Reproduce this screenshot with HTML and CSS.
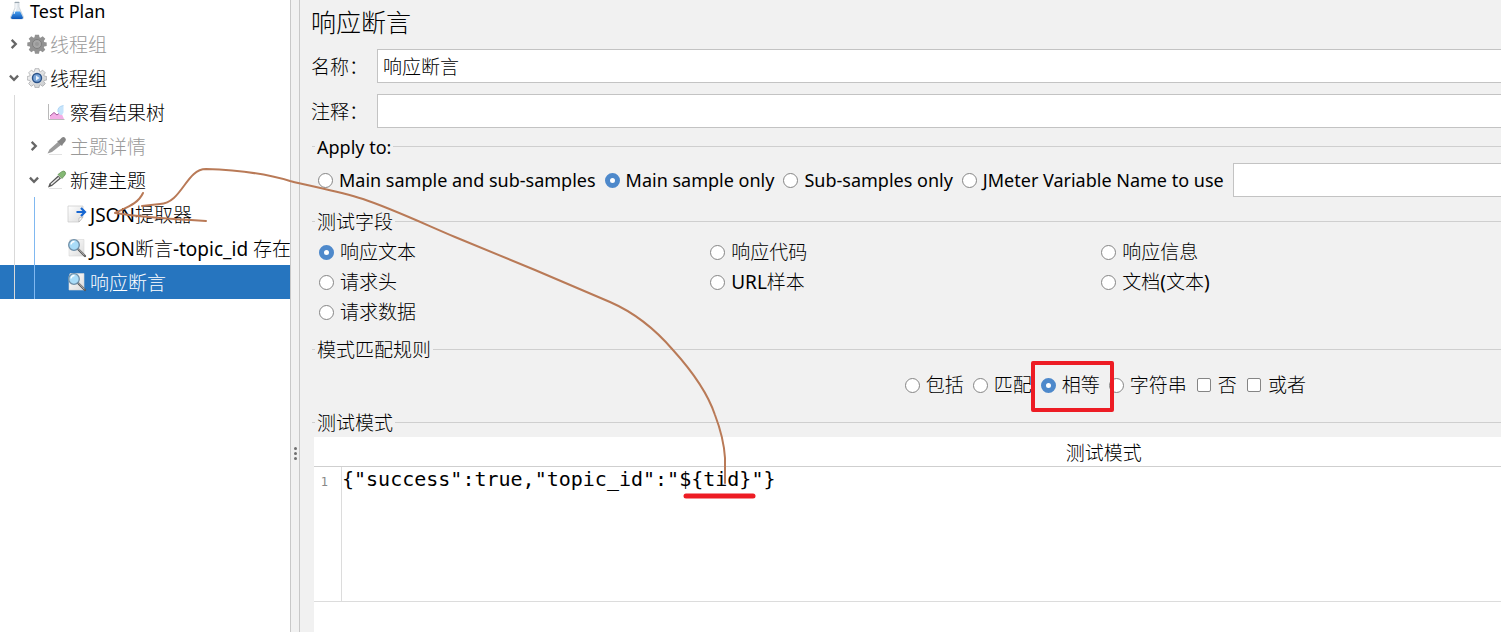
FILE: index.html
```
<!DOCTYPE html>
<html lang="zh-CN">
<head>
  <meta charset="UTF-8">
  <meta name="viewport" content="width=device-width, initial-scale=1.0">
  <title>响应断言</title>
  <link rel="stylesheet" href="styles.css">
</head>
<body>
  <svg class="defs" width="0" height="0" aria-hidden="true">
    <defs>
      <linearGradient id="metal" x1="0" y1="0" x2="1" y2="1">
        <stop offset="0" stop-color="#fafafa"/>
        <stop offset="1" stop-color="#c6c8ca"/>
      </linearGradient>
      <linearGradient id="paper" x1="0" y1="0" x2="1" y2="1">
        <stop offset="0" stop-color="#ffffff"/>
        <stop offset="1" stop-color="#dcdcdc"/>
      </linearGradient>
      <linearGradient id="liquid" x1="0" y1="0" x2="0" y2="1">
        <stop offset="0" stop-color="#4aa0ee"/>
        <stop offset="1" stop-color="#0a55b8"/>
      </linearGradient>
      <symbol id="gear" viewBox="0 0 20 20">
        <path d="M8 .7h4l.5 2.600 1 .4 2.200-1.500 2.600 2.600-1.500 2.200.4 1 2.500.5v3.500l-2.500.5-.4 1 1.500 2.200-2.600 2.600-2.200-1.500-1 .4-.5 2.500H8l-.5-2.500-1-.4-2.200 1.500-2.600-2.600 1.500-2.200-.4-1L.3 12V8.500L2.800 8l.4-1-1.500-2.200 2.600-2.600 2.200 1.500 1-.4z" stroke-linejoin="round"/>
      </symbol>
      <symbol id="search" viewBox="0 0 20 20">
        <path d="M3 1.500h14v16.500H2V5z" fill="url(#paper)" stroke="#d6d6d6" stroke-width=".6"/>
        <path d="M11 11l7 7" stroke="#555" stroke-width="2.200" stroke-linecap="round"/>
        <path d="M11 10.500l6.500 6.800" stroke="#ddd" stroke-width=".8"/>
        <circle cx="7" cy="7" r="5.300" fill="#a9dcf8" stroke="#6f8fa8" stroke-width="1.300"/>
        <path d="M4 6.500a3.500 3.500 0 0 1 3.500-3" fill="none" stroke="#fff" stroke-width="1.300"/>
      </symbol>
    </defs>
  </svg>

  <div class="app">
    <nav class="sidebar">
      <ul class="tree">
        <li class="node">
          <svg class="icon" viewBox="0 0 20 20">
            <path d="M8 2h4v5l4.500 10q.5 2-2 2h-9q-2.500 0-2-2L8 8z" fill="#e3e9ee" stroke="#c3ccd3" stroke-width=".7"/>
            <path d="M6.800 11.500h6.400l2.800 6q0 1.500-1.700 1.500H5.700Q4 19 4 17.500z" fill="url(#liquid)"/>
            <path d="M7.700 2.500h4.600" stroke="#9aa6af"/>
            <path d="M9 3.500v5L7 14" stroke="#fff" fill="none"/>
          </svg>
          <span class="title en">Test Plan</span>
        </li>
        <li class="node disabled">
          <button class="toggle" type="button" aria-label="展开"><svg viewBox="0 0 12 12"><path d="M4 2.500L7.500 6 4 9.500"/></svg></button>
          <svg class="icon" viewBox="0 0 20 20">
            <use href="#gear" fill="#929292"/>
            <circle cx="10" cy="10" r="4.500" fill="#a6a6a6" stroke="#7e7e7e"/>
            <circle cx="10" cy="10" r="2" fill="#989898"/>
          </svg>
          <span class="title">线程组</span>
        </li>
        <li class="node">
          <button class="toggle" type="button" aria-label="折叠"><svg viewBox="0 0 12 12"><path d="M2.500 4L6 7.500 9.500 4"/></svg></button>
          <svg class="icon" viewBox="0 0 20 20">
            <use href="#gear" fill="url(#metal)" stroke="#a0a2a5" stroke-width=".7"/>
            <circle cx="10" cy="10" r="4.500" fill="#79a5d8" stroke="#2b5288" stroke-width="1.400"/>
            <path d="M9 7.500l3.500 2.500L9 12.500z" fill="#e8f1fb"/>
          </svg>
          <span class="title">线程组</span>
        </li>
        <li class="node">
          <span class="guide"></span>
          <span class="blank"></span>
          <svg class="icon" viewBox="0 0 20 20">
            <path d="M3 17v-3l4-3.500 3 2.500 4-3 3 7z" fill="#f3aee6"/>
            <path d="M3 14l4-3.500 3 2.500 3-2.500" fill="none" stroke="#a35a9c"/>
            <path d="M11 10q-1-5.500 5.500-6.500v7l-1.500 2.500q-3.500 0-4-3z" fill="#c6e4fb"/>
            <path d="M11 10q-1-5.500 5.500-6.500" fill="none" stroke="#a5cff2" stroke-width=".8"/>
            <path d="M1.500 2v15.500h16" fill="none" stroke="#b9b9b9"/>
          </svg>
          <span class="title">察看结果树</span>
        </li>
        <li class="node disabled">
          <span class="guide"></span>
          <button class="toggle" type="button" aria-label="展开"><svg viewBox="0 0 12 12"><path d="M4 2.500L7.500 6 4 9.500"/></svg></button>
          <svg class="icon" viewBox="0 0 20 20">
            <path d="M2 18.500h13" stroke="#e2e2e2"/>
            <path d="M.5 17.500l2-4 9-8 3 3-9.500 7.500z" fill="#9b9b9b"/>
            <path d="M10 5l5 5 1-2 2.500-3q1-2-.5-3.300t-3.300 0L12 4.500z" fill="#858585"/>
          </svg>
          <span class="title">主题详情</span>
        </li>
        <li class="node">
          <span class="guide"></span>
          <button class="toggle" type="button" aria-label="折叠"><svg viewBox="0 0 12 12"><path d="M2.500 4L6 7.500 9.500 4"/></svg></button>
          <svg class="icon" viewBox="0 0 20 20">
            <path d="M2 18.500h13" stroke="#e2e2e2"/>
            <path d="M1 17.500l1.500-4 8.500-8 3 3-9 7.500z" fill="#555"/>
            <path d="M4 14.500l8-7" stroke="#eee" stroke-width="1.500"/>
            <path d="M11 4.500l4 4 3-3.500q1.300-2 0-3.300t-3.300 0z" fill="#84b874" stroke="#5a8a4c" stroke-width=".7"/>
          </svg>
          <span class="title">新建主题</span>
        </li>
        <li class="node">
          <span class="guide"></span>
          <span class="guide active"></span>
          <span class="blank"></span>
          <svg class="icon" viewBox="0 0 20 20">
            <path d="M1 2h15v11l-4 5H1z" fill="url(#paper)" stroke="#c9c9c9" stroke-width=".7"/>
            <path d="M16 13l-4 5v-4z" fill="#fff" stroke="#aaa" stroke-width=".6"/>
            <path d="M9.500 8H18M14 4l4 4-4 4" fill="none" stroke="#1767d2" stroke-width="2.200"/>
          </svg>
          <span class="title">JSON提取器</span>
        </li>
        <li class="node">
          <span class="guide"></span>
          <span class="guide active"></span>
          <span class="blank"></span>
          <svg class="icon" viewBox="0 0 20 20"><use href="#search"/></svg>
          <span class="title">JSON断言-topic_id 存在</span>
        </li>
        <li class="node selected">
          <span class="guide"></span>
          <span class="guide active"></span>
          <span class="blank"></span>
          <svg class="icon" viewBox="0 0 20 20"><use href="#search"/></svg>
          <span class="title">响应断言</span>
        </li>
      </ul>
    </nav>

    <div class="splitter"><i></i><i></i><i></i></div>

    <main class="main">
      <form class="panel">
        <h1>响应断言</h1>
        <div class="field">
          <label for="name">名称：</label>
          <input class="text" type="text" id="name" value="响应断言">
        </div>
        <div class="field">
          <label for="comment">注释：</label>
          <input class="text" type="text" id="comment">
        </div>

        <fieldset>
          <legend class="en">Apply to:</legend>
          <div class="options en">
            <label><input type="radio" name="scope">Main sample and sub-samples</label>
            <label><input type="radio" name="scope" checked>Main sample only</label>
            <label><input type="radio" name="scope">Sub-samples only</label>
            <label><input type="radio" name="scope">JMeter Variable Name to use</label>
            <input class="text" type="text" aria-label="JMeter Variable Name">
          </div>
        </fieldset>

        <fieldset>
          <legend>测试字段</legend>
          <div class="options columns">
            <label class="col1"><input type="radio" name="target" checked>响应文本</label>
            <label><input type="radio" name="target">响应代码</label>
            <label><input type="radio" name="target">响应信息</label>
            <label class="col1"><input type="radio" name="target">请求头</label>
            <label><input type="radio" name="target">URL样本</label>
            <label><input type="radio" name="target">文档(文本)</label>
            <label class="col1"><input type="radio" name="target">请求数据</label>
          </div>
        </fieldset>

        <fieldset>
          <legend>模式匹配规则</legend>
          <div class="options rules">
            <label><input type="radio" name="rule">包括</label>
            <label><input type="radio" name="rule">匹配</label>
            <label class="marked"><input type="radio" name="rule" checked>相等</label>
            <label><input type="radio" name="rule">字符串</label>
            <label><input type="checkbox" name="not">否</label>
            <label><input type="checkbox" name="or">或者</label>
          </div>
        </fieldset>

        <fieldset class="patterns">
          <legend>测试模式</legend>
          <table>
            <thead>
              <tr><th>测试模式</th></tr>
            </thead>
            <tbody>
              <tr>
                <td>
                  <div class="editor">
                    <span class="line-number">1</span>
                    <textarea aria-label="测试模式" spellcheck="false">{"success":true,"topic_id":"${tid}"}</textarea>
                  </div>
                </td>
              </tr>
            </tbody>
          </table>
        </fieldset>
      </form>
    </main>
  </div>

  <!-- hand-drawn notes -->
  <svg class="notes" width="1501" height="632" aria-hidden="true">
    <path class="arrow" d="M725 483V458C724 442 720 428 715 415C708 394 692 371 673 350C655 329 633 312 610 302L535 270L455 237C420 222 390 208 363 199C338 191 314 187 290 181C267 174 240 170 206 169C186 169 182 203 160 204L142 206"/>
    <path class="arrow" d="M143 193C138 204 127 207 115 213C140 217 170 219 206 221"/>
    <path class="underline" d="M686 496H753"/>
  </svg>
</body>
</html>
```
FILE: styles.css
```
* {
  box-sizing: border-box;
}
body {
  margin: 0;
  font-family: "Noto Sans", "Noto Sans CJK SC Light", "Noto Sans CJK SC", sans-serif;
  font-size: 19px;
  line-height: 24px;
  color: #000;
  background: #f1f1f1;
  overflow: hidden;
}
.defs {
  position: absolute;
}
.en {
  font-size: 18px;
}
.app {
  display: flex;
  height: 100vh;
}

/* tree */
.sidebar {
  flex: 0 0 290px;
  background: #fff;
  overflow: hidden;
}
.tree {
  list-style: none;
  margin: -7px 0 0;
  padding: 0;
}
.node {
  display: flex;
  align-items: center;
  height: 34px;
  padding-left: 7px;
  white-space: nowrap;
}
.node.disabled {
  color: #999;
}
.node.selected {
  background: #2675bf;
  color: #fff;
}
.title {
  padding-top: 2px;
}
.guide {
  flex: 0 0 13px;
  align-self: stretch;
  margin-left: 7px;
  border-left: 1px solid #d9d9d9;
}
.guide.active {
  border-color: #80b8f0;
}
.blank {
  flex: 0 0 20px;
}
.toggle {
  flex: 0 0 20px;
  height: 20px;
  padding: 0 6px 0 0;
  border: none;
  background: none;
}
.toggle svg {
  display: block;
  width: 14px;
  height: 14px;
}
.toggle path {
  fill: none;
  stroke: #666;
  stroke-width: 2;
}
.icon {
  flex: 0 0 20px;
  height: 20px;
  margin-right: 3px;
}

.splitter {
  flex: 0 0 10px;
  display: flex;
  flex-direction: column;
  align-items: center;
  justify-content: flex-end;
  gap: 2px;
  padding-bottom: 172px;
  border-left: 1px solid #c8c8c8;
  border-right: 1px solid #c8c8c8;
}
.splitter i {
  width: 3px;
  height: 3px;
  border-radius: 50%;
  background: #707070;
}

/* form */
.main {
  flex: 1;
  min-width: 0;
  padding-left: 11px;
  overflow: hidden;
}
.panel {
  display: flex;
  flex-direction: column;
  width: 133%;
  height: 100%;
}
h1 {
  margin: 6px 0 11px;
  font-size: 25px;
  font-weight: normal;
  line-height: 32px;
}
.field {
  display: flex;
  align-items: center;
  gap: 9px;
  margin-bottom: 11px;
}
.field label {
  padding-top: 2px;
}
.text {
  flex: 1;
  height: 34px;
  padding: 0 5px;
  border: 1px solid #c3c3c3;
  background: #fff;
  font: inherit;
}
fieldset {
  margin: 0 0 0 1px;
  padding: 0 0 12px 2px;
  border: none;
  border-top: 1px solid #cfcfcf;
  min-width: 0;
}
.field + fieldset {
  margin-top: -5px;
}
legend {
  height: 24px;
  margin-left: 1px;
  padding: 0 2px;
  line-height: 26px;
}
.options {
  display: flex;
  align-items: center;
  padding: 5px 0 0 4px;
  gap: 9px;
}
.options label {
  display: flex;
  align-items: center;
  gap: 6px;
  line-height: 26px;
  white-space: nowrap;
}
.columns {
  display: grid;
  grid-template-columns: repeat(4, 1fr);
  grid-auto-rows: 30px;
  gap: 0;
  padding: 4px 10px 0 5px;
  margin-bottom: -2px;
}
.columns .col1 {
  grid-column: 1;
}
.rules {
  justify-content: center;
  padding: 11px 0 0 3px;
}
input[type="radio"],
input[type="checkbox"] {
  appearance: none;
  flex: none;
  width: 15px;
  height: 15px;
  margin: 0;
  border: 1px solid #858585;
  border-radius: 50%;
  background: #fff;
}
input[type="checkbox"] {
  width: 14px;
  height: 14px;
  margin: 0 1px;
  border-radius: 2px;
}
input[type="radio"]:checked {
  border: 5px solid #4e89cb;
}
.marked {
  position: relative;
}
.marked::after {
  content: "";
  position: absolute;
  inset: -11px -14px -14px -10px;
  border: 4px solid #ed1c24;
  border-radius: 2px;
}

/* pattern table */
.patterns {
  flex: 1;
  display: flex;
  flex-direction: column;
  padding-bottom: 0;
}
table {
  width: 100%;
  height: 100%;
  margin-top: 3px;
  border-collapse: collapse;
  background: #fff;
}
th {
  height: 29px;
  padding: 3px 0 0;
  border-bottom: 1px solid #cfcfcf;
  font-weight: normal;
}
td {
  padding: 0;
  vertical-align: top;
}
.editor {
  display: flex;
  height: 135px;
  border-bottom: 1px solid #dcdcdc;
}
.line-number {
  flex: 0 0 28px;
  padding: 3px 13px 0 0;
  border-right: 1px solid #dcdcdc;
  color: #888;
  font: 12px/24px "DejaVu Sans Mono", monospace;
  text-align: right;
}
textarea {
  flex: 1;
  padding: 0;
  border: none;
  outline: none;
  resize: none;
  background: none;
  color: #000;
  font: 20px/24px "DejaVu Sans Mono", monospace;
}

.notes {
  position: absolute;
  top: 0;
  left: 0;
  pointer-events: none;
}
.notes path {
  fill: none;
  stroke-linecap: round;
  stroke-linejoin: round;
}
.arrow {
  stroke: #b97a57;
  stroke-width: 2;
}
.underline {
  stroke: #ed1c24;
  stroke-width: 5;
}
```
